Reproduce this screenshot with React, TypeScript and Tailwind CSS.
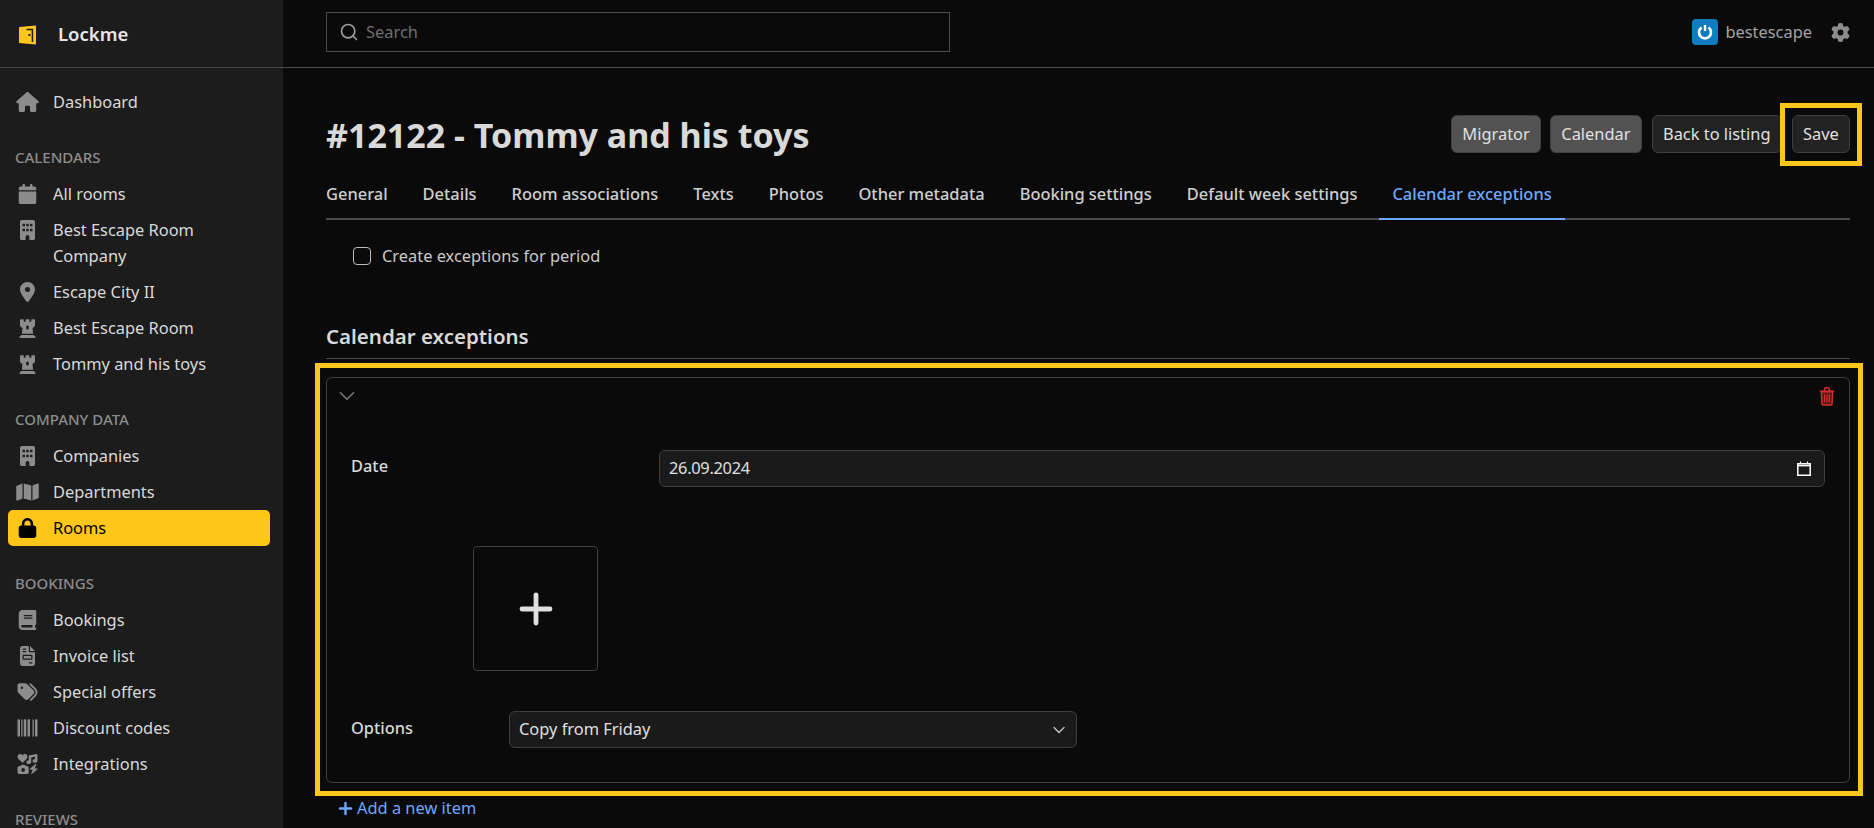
import { Search, ChevronDown, Plus } from 'lucide-react';
import { FaHouse, FaCalendar, FaBuilding, FaLocationDot, FaChessRook, FaMap, FaLock, FaBook, FaFileInvoice, FaTags, FaBarcode, FaGear, FaIcons } from 'react-icons/fa6';
import type { ComponentType, ReactNode } from 'react';

type Item = { label: string; icon: ComponentType<{ className?: string }>; active?: boolean };

const calendars: Item[] = [
  { label: 'All rooms', icon: FaCalendar },
  { label: 'Best Escape Room Company', icon: FaBuilding },
  { label: 'Escape City II', icon: FaLocationDot },
  { label: 'Best Escape Room', icon: FaChessRook },
  { label: 'Tommy and his toys', icon: FaChessRook },
];

const company: Item[] = [
  { label: 'Companies', icon: FaBuilding },
  { label: 'Departments', icon: FaMap },
  { label: 'Rooms', icon: FaLock, active: true },
];

const bookings: Item[] = [
  { label: 'Bookings', icon: FaBook },
  { label: 'Invoice list', icon: FaFileInvoice },
  { label: 'Special offers', icon: FaTags },
  { label: 'Discount codes', icon: FaBarcode },
  { label: 'Integrations', icon: FaIcons },
];

const tabs = ['General', 'Details', 'Room associations', 'Texts', 'Photos', 'Other metadata', 'Booking settings', 'Default week settings'];

function NavItem({ item }: { item: Item }) {
  const Icon = item.icon;
  return (
    <div className={`flex items-start ml-2 mr-[13px] pl-2 pr-2 py-[5px] rounded-[5px] leading-[26px] ${item.active ? 'bg-[#ffc61a] text-black' : 'text-[#d9d9d9]'}`}>
      <span className={`w-[37px] h-[26px] shrink-0 flex items-center ${item.active ? 'text-black' : 'text-[#8c8c8c]'}`}>
        <Icon className="w-[23px] h-[20px]" />
      </span>
      <span>{item.label}</span>
    </div>
  );
}

function NavGroup({ title, items }: { title: string; items: Item[] }) {
  return (
    <div className="mt-[27px]">
      <div className="px-[15px] text-[15px] leading-[20px] font-medium text-[#8c8c8c] mb-[9px]">{title}</div>
      {items.map((item) => (
        <NavItem key={item.label} item={item} />
      ))}
    </div>
  );
}

function Btn({ children, light }: { children: ReactNode; light?: boolean }) {
  return (
    <div className={`relative h-[38px] pt-[1px] px-[10.25px] flex items-center rounded-[6px] border border-[#3f3f3f] text-[#e0e0e0] ${light ? 'bg-[#525252]' : 'bg-[#222222]'}`}>
      {children}
    </div>
  );
}

function DoorLogo() {
  return (
    <svg viewBox="0 0 18 20" className="w-[17px] h-[20px] mt-[3px]">
      <path fill="#ffc61a" d="M0 1.5 L18 0 V20 L0 18.5 Z" />
      <path fill="#1c1c1c" d="M8 3.5 H15 V17.5 H13.4 V5 H8 Z M10 9 h2 v2 h-2 z" />
    </svg>
  );
}

function TrashIcon() {
  return (
    <svg viewBox="0 0 16 20" className="w-[16px] h-[19px]">
      <path d="M2 5 H14 L13.3 18 a1 1 0 0 1 -1 1 H3.7 a1 1 0 0 1 -1 -1 Z" fill="#5c1416" stroke="#d32f2f" strokeWidth="1.5" />
      <path d="M0.5 4.5 H15.5 M5.5 4 V1.8 a1 1 0 0 1 1 -1 H9.5 a1 1 0 0 1 1 1 V4" fill="none" stroke="#d32f2f" strokeWidth="1.5" />
      <path d="M5.5 8 V16 M8 8 V16 M10.5 8 V16" stroke="#d32f2f" strokeWidth="1.3" />
    </svg>
  );
}

function DateIcon() {
  return (
    <svg viewBox="0 0 14 15" className="w-[14px] h-[15px]">
      <path d="M0.8 2.8 H13.2 V14.2 H0.8 Z" fill="none" stroke="#ffffff" strokeWidth="1.5" />
      <path d="M0.8 4.6 H13.2" stroke="#ffffff" strokeWidth="1.6" />
      <path d="M3.5 0.5 V3 M10.5 0.5 V3" stroke="#ffffff" strokeWidth="1.1" />
    </svg>
  );
}

export default function App() {
  return (
    <div className="flex h-screen overflow-hidden bg-[#0a0a0a] text-[16.4px] text-[#e0e0e0] font-['Noto_Sans',sans-serif]">
      <aside className="w-[283px] shrink-0 bg-[#1c1c1c] overflow-hidden">
        <div className="h-[68px] flex items-center pl-[19px] border-b border-[#4a4a4a]">
          <DoorLogo />
          <span className="ml-[22px] mt-[1px] text-[18.5px] font-semibold text-[#e6e6e6]">Lockme</span>
        </div>
        <div className="mt-[16px]">
          <NavItem item={{ label: 'Dashboard', icon: FaHouse }} />
        </div>
        <NavGroup title="CALENDARS" items={calendars} />
        <NavGroup title="COMPANY DATA" items={company} />
        <NavGroup title="BOOKINGS" items={bookings} />
        <div className="mt-[27px] px-[15px] text-[15px] leading-[20px] font-medium text-[#8c8c8c]">REVIEWS</div>
      </aside>

      <main className="flex-1 min-w-0">
        <header className="h-[68px] flex items-start justify-between pt-[12px] pl-[43px] pr-[24px] border-b border-[#4a4a4a]">
          <div className="w-[624px] h-[40px] flex items-center gap-[7px] px-[12px] border border-[#4a4a4a]">
            <Search className="w-[20px] h-[20px] text-[#9a9a9a]" />
            <span className="text-[#6f6f6f]">Search</span>
          </div>
          <div className="flex items-center mt-[7px]">
            <div className="w-[26px] h-[26px] rounded-[4px] bg-[#0f7cc0] flex items-center justify-center">
              <svg viewBox="0 0 16 16" className="w-[16px] h-[16px]">
                <path d="M4.5 3.5 a6 6 0 1 0 7 0" fill="none" stroke="#ffffff" strokeWidth="2.6" />
                <path d="M8 1 V7" stroke="#ffffff" strokeWidth="2.4" />
              </svg>
            </div>
            <span className="ml-[7px] text-[#a3a3a3]">bestescape</span>
            <FaGear className="ml-[19px] w-[19px] h-[19px] text-[#8c8c8c]" />
          </div>
        </header>

        <div className="pl-[43px] pr-[24px]">
          <div className="flex items-center justify-between mt-[47px] h-[38px]">
            <h1 className="text-[34px] mt-[2px] font-bold text-[#d9d9d9]">#12122 - Tommy and his toys</h1>
            <div className="flex items-center">
              <Btn light>Migrator</Btn>
              <div className="w-[9px]" />
              <Btn light>Calendar</Btn>
              <div className="w-[10px]" />
              <Btn>Back to listing</Btn>
              <div className="w-[10px]" />
              <Btn>
                Save
                <div className="absolute -left-[13px] -right-[13px] -top-[13px] -bottom-[14px] border-[5px] border-[#ffc61a] pointer-events-none" />
              </Btn>
            </div>
          </div>

          <div className="flex gap-[35px] mt-[21px] h-[46px] border-b-2 border-[#4a4a4a] font-medium text-[16.45px] leading-[40px] text-[#cfcfcf]">
            {tabs.map((tab) => (
              <div key={tab}>{tab}</div>
            ))}
            <div className="-mx-[13px] px-[13px] h-[46px] text-[#6ea8fe] border-b-2 border-[#6ea8fe]">Calendar exceptions</div>
          </div>

          <label className="flex items-center ml-[27px] mt-[26px] h-[20px]">
            <span className="w-[18px] h-[18px] rounded-[4px] border border-[#bdbdbd]" />
            <span className="ml-[11px] text-[#c9c9c9]">Create exceptions for period</span>
          </label>

          <h2 className="mt-[55px] text-[20.5px] leading-[30px] font-semibold text-[#d9d9d9] pb-[7px] border-b border-[#4a4a4a]">Calendar exceptions</h2>

          <div className="relative mt-[18px] h-[406px] border border-[#3f3f3f] rounded-[6px]">
            <div className="absolute -left-[12px] -right-[14px] -top-[15px] -bottom-[14px] border-[5px] border-[#ffc61a] pointer-events-none" />
            <div className="flex items-center justify-between h-[36px] pl-[7px] pr-[14px]">
              <ChevronDown className="w-[26px] h-[26px] text-[#777777]" strokeWidth={1.5} />
              <TrashIcon />
            </div>
            <div className="flex items-center mt-[36px] pl-[24px] pr-[24px]">
              <span className="w-[308px] -mt-[4px] font-medium text-[#d9d9d9]">Date</span>
              <div className="flex-1 h-[37px] flex items-center justify-between pl-[9px] pr-[13px] rounded-[6px] border border-[#3f3f3f] bg-[#1a1a1a] text-[#e0e0e0]">
                <span className="tracking-[-0.3px]">26.09.2024</span>
                <DateIcon />
              </div>
            </div>
            <div className="mt-[59px] ml-[146px] w-[125px] h-[125px] flex items-center justify-center rounded-[4px] border border-[#3f3f3f]">
              <Plus className="w-[48px] h-[48px] text-[#e0e0e0]" strokeWidth={2.4} />
            </div>
            <div className="flex items-center mt-[40px] pl-[24px]">
              <span className="w-[158px] -mt-[2px] font-medium text-[#d9d9d9]">Options</span>
              <div className="w-[568px] h-[37px] flex items-center justify-between pl-[9px] pr-[7px] rounded-[6px] border border-[#3f3f3f] bg-[#1a1a1a] text-[#e0e0e0]">
                Copy from Friday
                <ChevronDown className="w-[20px] h-[20px] text-[#bdbdbd]" strokeWidth={1.8} />
              </div>
            </div>
          </div>

          <div className="flex items-center mt-[13px] ml-[10px] text-[#6ea8fe]">
            <Plus className="w-[19px] h-[19px]" strokeWidth={3} />
            <span className="ml-[2px]">Add a new item</span>
          </div>
        </div>
      </main>
    </div>
  );
}
